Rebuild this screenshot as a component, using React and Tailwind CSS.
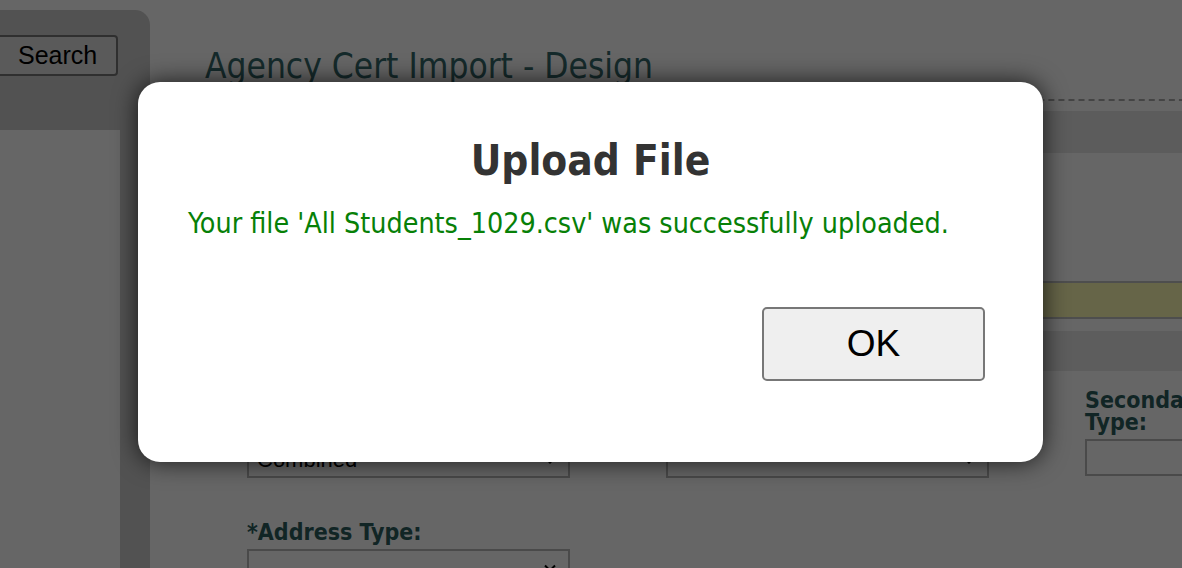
import React from 'react';

function Chevron() {
  return (
    <svg width="12" height="8" viewBox="0 0 12 8" className="shrink-0">
      <path d="M1 1.5 L6 6.5 L11 1.5" fill="none" stroke="#000" strokeWidth="2" />
    </svg>
  );
}

function Select({ value }) {
  return (
    <div className="flex items-center justify-between h-[37px] border-2 border-[#b9b9b9] bg-white pl-2 pr-[12px] font-['Liberation_Sans',sans-serif] text-[22px] text-black">
      <span>{value}</span>
      <Chevron />
    </div>
  );
}

function Field({ label, children, className }) {
  return (
    <div className={`flex flex-col ${className}`}>
      <label className="text-[23px] font-bold leading-[22px] text-[#2c5c5e] mb-[6px]">{label}</label>
      {children}
    </div>
  );
}

function Page() {
  return (
    <div className="flex h-full font-['DejaVu_Sans_Condensed','DejaVu_Sans',sans-serif]">
      {/* left sidebar */}
      <aside className="w-[150px] shrink-0 mt-[10px] bg-[#cdcdcd] rounded-tr-[15px] flex flex-col">
        <div className="h-[120px] pt-[25px]">
          <button className="ml-[-4px] h-[41px] w-[122px] pl-[20px] text-left border-2 border-[#777] rounded-[4px] bg-[#e1e1e1] font-['Liberation_Sans',sans-serif] text-[25px] text-black">
            Search
          </button>
        </div>
        <div className="flex-1 w-[120px] bg-white" />
      </aside>

      {/* main */}
      <main className="flex-1 pl-[55px] pt-[45px]">
        <h1 className="text-[35px] leading-[42px] text-[#35696b]">Agency Cert Import - Design</h1>
        <div className="mt-[12px] border-b-2 border-dashed border-[#aaa]" />
        <div className="mt-[10px] h-[42px] bg-[#e6e6e6]" />
        <div className="h-[128px]" />
        <div className="h-[38px] bg-[#fffcb4] border-y-2 border-[#c3c3c3]" />
        <div className="mt-[12px] h-[40px] bg-[#e9e9e9]" />
        <div className="flex gap-[96px] pl-[42px] mt-[18px]">
          <Field label="*Certification Type:" className="w-[323px] pt-[24px]">
            <Select value="Combined" />
          </Field>
          <Field label="*Program Type:" className="w-[323px] pt-[24px]">
            <Select value="" />
          </Field>
          <Field label="Secondary Type:" className="w-[120px]">
            <div className="h-[37px] border-2 border-[#b9b9b9] bg-white w-[200px]" />
          </Field>
        </div>
        <div className="pl-[42px] mt-[43px]">
          <Field label="*Address Type:" className="w-[323px]">
            <Select value="" />
          </Field>
        </div>
      </main>
    </div>
  );
}

export default function App() {
  return (
    <div className="relative w-[1182px] h-[568px] overflow-hidden bg-white">
      <Page />
      <div className="absolute inset-0 bg-black/60" />
      <div className="absolute left-[138px] top-[82px] w-[905px] h-[380px] bg-white rounded-[22px] shadow-[0_0_24px_rgba(0,0,0,0.75)] font-['DejaVu_Sans_Condensed','DejaVu_Sans',sans-serif]">
        <h2 className="mt-[54px] text-center text-[42px] font-bold leading-[50px] text-[#333]">Upload File</h2>
        <p className="mt-[22px] pl-[50px] text-[28.4px] leading-[32px] text-[#078007]">
          Your file 'All Students_1029.csv' was successfully uploaded.
        </p>
        <div className="flex justify-end pr-[58px] mt-[67px]">
          <button className="w-[223px] h-[74px] bg-[#efefef] border-2 border-[#777] rounded-[5px] font-['Liberation_Sans',sans-serif] text-[37px] text-black">
            OK
          </button>
        </div>
      </div>
    </div>
  );
}
